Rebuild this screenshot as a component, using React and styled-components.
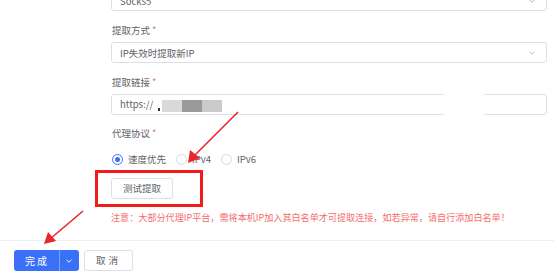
import React from 'react';
import styled, { createGlobalStyle } from 'styled-components';

const GlobalStyle = createGlobalStyle`
  html, body {
    margin: 0;
    padding: 0;
    background: #fff;
    font-family: "Noto Sans CJK SC", "Noto Sans", sans-serif;
    overflow: hidden;
  }
`;

const Page = styled.div`
  position: relative;
  width: 554px;
  height: 279px;
  overflow: hidden;
  background: #fff;
`;

const Form = styled.div`
  display: flex;
  flex-direction: column;
  padding: 0 7px 0 111px;
  margin-top: -10px;
`;

const Label = styled.div`
  font-size: 9.5px;
  line-height: 16px;
  color: #606266;
  margin-top: ${(p) => p.$top || 11}px;
  margin-bottom: 4px;
  padding-left: 1px;

  &::after {
    content: '*';
    color: #f56c6c;
    margin-left: 2px;
  }
`;

const Field = styled.div`
  position: relative;
  display: flex;
  align-items: center;
  height: 21px;
  box-sizing: border-box;
  border: 1px solid #dcdfe6;
  border-radius: 3px;
  padding: 0 8px;
  font-size: 9.5px;
  color: #606266;
`;

const FieldText = styled.span`
  flex: 1;
  white-space: nowrap;
`;

const Chevron = styled.svg`
  width: 8px;
  height: 8px;
  flex: none;
  margin-right: 2px;
`;

const Blur = styled.span`
  display: inline-block;
  height: 12px;
  width: ${(p) => p.$w}px;
  background: ${(p) => p.$c};
  vertical-align: middle;
  filter: blur(0.6px);
`;

const Tick = styled.span`
  display: inline-block;
  width: 2px;
  height: 3px;
  margin: 0 2px 0 5px;
  background: #333;
  vertical-align: -3px;
`;

const Smudge = styled.span`
  position: absolute;
  left: 331px;
  top: -2px;
  width: 42px;
  height: 24px;
  background: #fff;
  filter: blur(1px);
`;

const RadioRow = styled.div`
  display: flex;
  align-items: center;
  gap: 10px;
  margin-top: 6px;
  height: 16px;
  line-height: 16px;
  padding-left: 1px;
`;

const RadioItem = styled.label`
  display: flex;
  align-items: center;
  gap: 5px;
  font-size: 9.5px;
  color: #606266;
`;

const Dot = styled.span`
  width: 11px;
  height: 11px;
  box-sizing: border-box;
  border-radius: 50%;
  border: 1px solid ${(p) => (p.$on ? '#3a6ff7' : '#d4d7de')};
  display: flex;
  align-items: center;
  justify-content: center;

  &::after {
    content: '';
    width: 5px;
    height: 5px;
    border-radius: 50%;
    background: ${(p) => (p.$on ? '#3a6ff7' : 'transparent')};
  }
`;

const TestWrap = styled.div`
  position: relative;
  display: flex;
  align-self: flex-start;
  margin-top: 11px;
`;

const Button = styled.button`
  height: 21px;
  box-sizing: border-box;
  padding: 0 11px;
  border: 1px solid #dcdfe6;
  border-radius: 3px;
  background: #fff;
  color: #606266;
  font-family: inherit;
  font-size: 9.5px;
  line-height: 1;
  letter-spacing: ${(p) => p.$spacing || 0}px;
  cursor: pointer;
`;

const Highlight = styled.div`
  position: absolute;
  left: -16px;
  top: -8px;
  right: -30px;
  bottom: -8px;
  border: 3px solid #f21b1b;
  pointer-events: none;
`;

const Notice = styled.div`
  margin-top: 10px;
  font-size: 9.1px;
  line-height: 16px;
  color: #f56c6c;
  white-space: nowrap;
`;

const Footer = styled.div`
  display: flex;
  align-items: center;
  gap: 5px;
  margin-top: 15px;
  border-top: 1px solid #ebeef5;
  padding: 9px 14px 0;
`;

const Split = styled.div`
  display: flex;
  height: 21px;
  border-radius: 3px;
  overflow: hidden;
  background: #3a6ff7;
  color: #fff;
`;

const SplitMain = styled.div`
  display: flex;
  align-items: center;
  padding: 0 10px 0 11px;
  font-size: 10px;
  letter-spacing: 2px;
  border-right: 1px solid rgba(255, 255, 255, 0.35);
`;

const SplitArrow = styled.div`
  width: 19px;
  display: flex;
  align-items: center;
  justify-content: center;
`;

const Arrows = styled.svg`
  position: absolute;
  inset: 0;
  pointer-events: none;
`;

const Down = ({ color = '#b0b3b8' }) => (
  <Chevron viewBox="0 0 8 8">
    <path d="M1.5 2.8 L4 5.2 L6.5 2.8" fill="none" stroke={color} strokeWidth="0.9" />
  </Chevron>
);

export default function App() {
  return (
    <Page>
      <GlobalStyle />
      <Form>
        <Field>
          <FieldText>Socks5</FieldText>
          <Down />
        </Field>

        <Label>提取方式</Label>
        <Field>
          <FieldText>IP失效时提取新IP</FieldText>
          <Down />
        </Field>

        <Label>提取链接</Label>
        <Field>
          <FieldText>
            https://
            <Tick />
            <Blur $w={20} $c="#d9d9d9" />
            <Blur $w={20} $c="#9a9a9a" />
            <Blur $w={20} $c="#cacaca" />
          </FieldText>
          <Smudge />
        </Field>

        <Label $top={10}>代理协议</Label>
        <RadioRow>
          <RadioItem>
            <Dot $on />
            速度优先
          </RadioItem>
          <RadioItem>
            <Dot />
            IPv4
          </RadioItem>
          <RadioItem>
            <Dot />
            IPv6
          </RadioItem>
        </RadioRow>

        <TestWrap>
          <Button>测试提取</Button>
          <Highlight />
        </TestWrap>

        <Notice>
          注意：大部分代理IP平台，需将本机IP加入其白名单才可提取连接，如若异常，请自行添加白名单！
        </Notice>
      </Form>

      <Footer>
        <Split>
          <SplitMain>完成</SplitMain>
          <SplitArrow>
            <Down color="#ffffff" />
          </SplitArrow>
        </Split>
        <Button $spacing={3}>取消</Button>
      </Footer>

      <Arrows viewBox="0 0 554 279" width="554" height="279">
        <g stroke="#e8262b" strokeWidth="1.6" fill="#e8262b">
          <line x1="238" y1="112" x2="193" y2="157" />
          <polygon points="188,163 190,150 200,158" stroke="none" />
          <line x1="83" y1="211" x2="50" y2="239" />
          <polygon points="44,244 48,232 56,241" stroke="none" />
        </g>
      </Arrows>
    </Page>
  );
}
